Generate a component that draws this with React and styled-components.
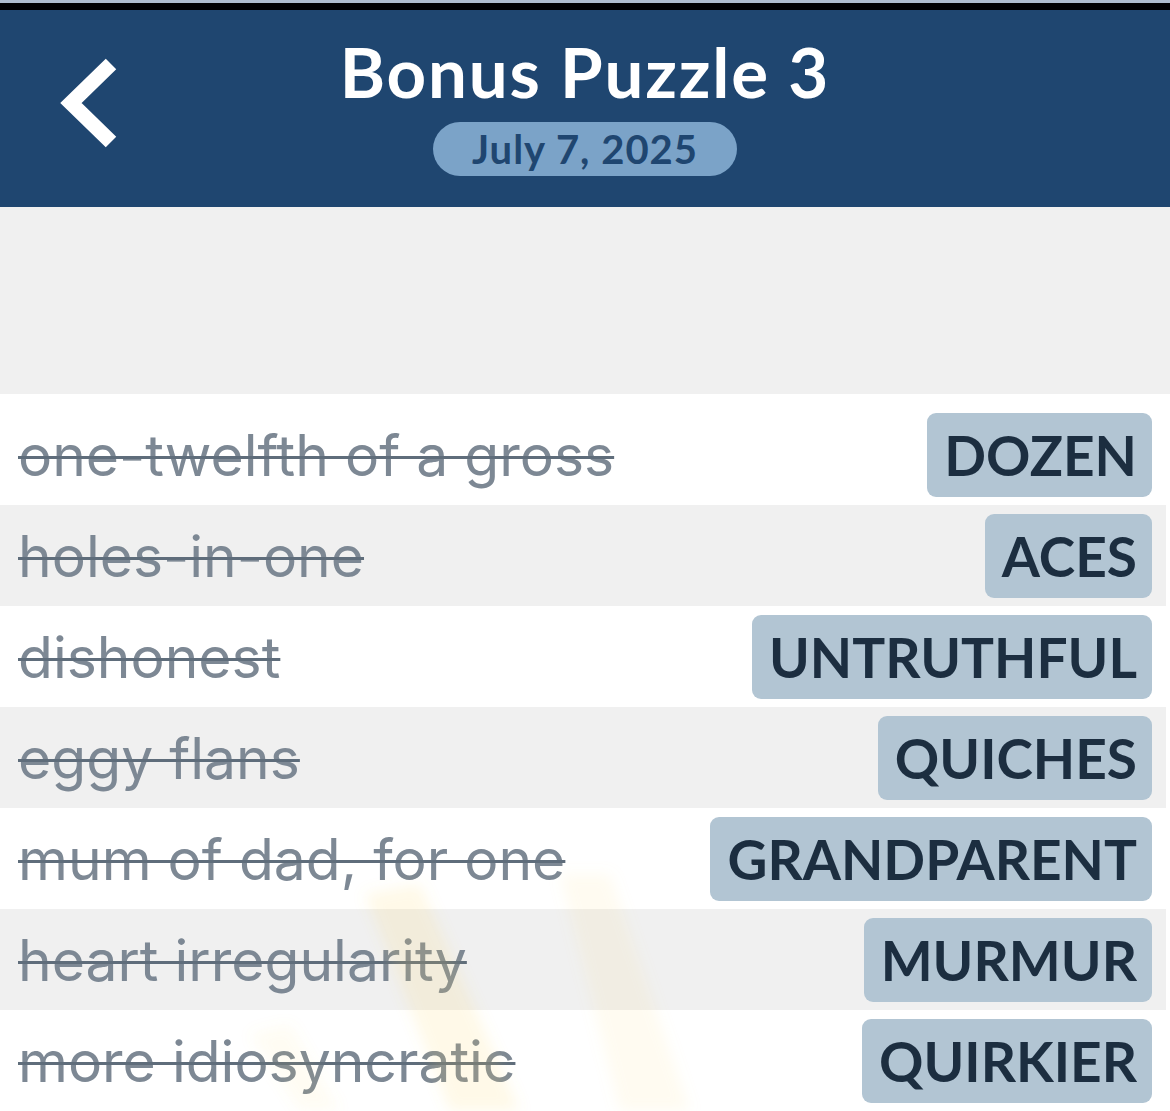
import React from 'react'
import styled, { createGlobalStyle } from 'styled-components'

const GlobalStyle = createGlobalStyle`
    html, body {
        margin: 0;
        padding: 0;
        background: #ffffff;
    }
    body {
        font-family: Lato, 'Noto Sans', sans-serif;
    }
`

const Pagina = styled.div`
    width: 1170px;
    height: 1111px;
    display: flex;
    flex-direction: column;
    overflow: hidden;
`

const BarraTopo = styled.div`
    height: 7px;
    background-color: #000000;
    border-top: 3px solid #aebccc;
`

const Cabecalho = styled.header`
    height: 197px;
    background-color: #1f4670;
    display: grid;
    grid-template-columns: 140px 1fr 140px;
    align-items: center;
`

const BotaoVoltar = styled.button`
    background: none;
    border: 0;
    padding: 0;
    margin: 0 0 12px 57px;
    width: 70px;
    height: 100px;
    display: flex;
    align-items: center;
    cursor: pointer;
`

const Titulos = styled.div`
    display: flex;
    flex-direction: column;
    align-items: center;
    padding-bottom: 10px;
`

const Titulo = styled.h1`
    margin: 0;
    color: #ffffff;
    font-family: Lato, sans-serif;
    font-weight: 700;
    font-size: 69px;
    line-height: 80px;
    letter-spacing: 1.8px;
`

const Data = styled.div`
    margin-top: 10px;
    height: 54px;
    width: 304px;
    border-radius: 27px;
    background-color: #7ba3c8;
    color: #1f4670;
    font-family: Lato, sans-serif;
    font-weight: 700;
    font-size: 40px;
    letter-spacing: 1px;
    display: flex;
    align-items: center;
    justify-content: center;
`

const Espaco = styled.div`
    height: 187px;
    background-color: #f0f0f0;
`

const Lista = styled.section`
    position: relative;
    padding-top: 10px;
    margin-right: 4px;
    display: flex;
    flex-direction: column;
`

const Linha = styled.div`
    height: 101px;
    display: flex;
    align-items: center;
    justify-content: space-between;
    padding: 0 14px 0 18px;
    background-color: ${props => (props.cinza ? '#f0f0f0' : '#ffffff')};
`

const Pista = styled.span`
    font-family: Inter, Lato, sans-serif;
    font-size: 57px;
    line-height: 70px;
    color: #7d8894;
    text-decoration: line-through;
    text-decoration-color: #5f6d7b;
    text-decoration-thickness: 3px;
    white-space: nowrap;
    margin-top: 2px;
`

const Resposta = styled.span`
    height: 84px;
    padding: 0 15px 0 17px;
    display: flex;
    align-items: center;
    border-radius: 9px;
    background-color: #b2c5d3;
    color: #1c2e40;
    font-family: Lato, sans-serif;
    font-weight: 700;
    font-size: 55px;
    white-space: nowrap;
`

const Raios = styled.svg`
    position: absolute;
    left: 0;
    top: 0;
    width: 100%;
    height: 100%;
    pointer-events: none;
`

const itens = [
    { pista: 'one-twelfth of a gross', resposta: 'DOZEN' },
    { pista: 'holes-in-one', resposta: 'ACES' },
    { pista: 'dishonest', resposta: 'UNTRUTHFUL' },
    { pista: 'eggy flans', resposta: 'QUICHES' },
    { pista: 'mum of dad, for one', resposta: 'GRANDPARENT' },
    { pista: 'heart irregularity', resposta: 'MURMUR' },
    { pista: 'more idiosyncratic', resposta: 'QUIRKIER' },
]

function Seta() {
    return (
        <svg width="70" height="100" viewBox="0 0 70 100">
            <polyline
                points="54,11 14,50 54,89"
                fill="none"
                stroke="#ffffff"
                strokeWidth="15"
                strokeLinejoin="miter"
            />
        </svg>
    )
}

export default function App() {
    return (
        <Pagina>
            <GlobalStyle />
            <BarraTopo />
            <Cabecalho>
                <BotaoVoltar aria-label="voltar">
                    <Seta />
                </BotaoVoltar>
                <Titulos>
                    <Titulo>Bonus Puzzle 3</Titulo>
                    <Data>July 7, 2025</Data>
                </Titulos>
                <div />
            </Cabecalho>
            <Espaco />
            <Lista>
                {itens.map((item, i) => (
                    <Linha key={item.resposta} cinza={i % 2 === 1}>
                        <Pista>{item.pista}</Pista>
                        <Resposta>{item.resposta}</Resposta>
                    </Linha>
                ))}
                {/* raios amarelos bem fracos no fundo */}
                <Raios viewBox="0 0 1166 717" preserveAspectRatio="none">
                    <defs>
                        <filter id="borrao" x="-50%" y="-50%" width="200%" height="200%">
                            <feGaussianBlur stdDeviation="7" />
                        </filter>
                    </defs>
                    <g filter="url(#borrao)">
                        <polygon points="365,500 420,490 520,717 450,717" fill="#ffd966" opacity="0.15" />
                        <polygon points="560,480 610,480 690,717 620,717" fill="#ffe08a" opacity="0.12" />
                        <polygon points="250,640 290,630 340,717 300,717" fill="#ffd966" opacity="0.08" />
                    </g>
                </Raios>
            </Lista>
        </Pagina>
    )
}
